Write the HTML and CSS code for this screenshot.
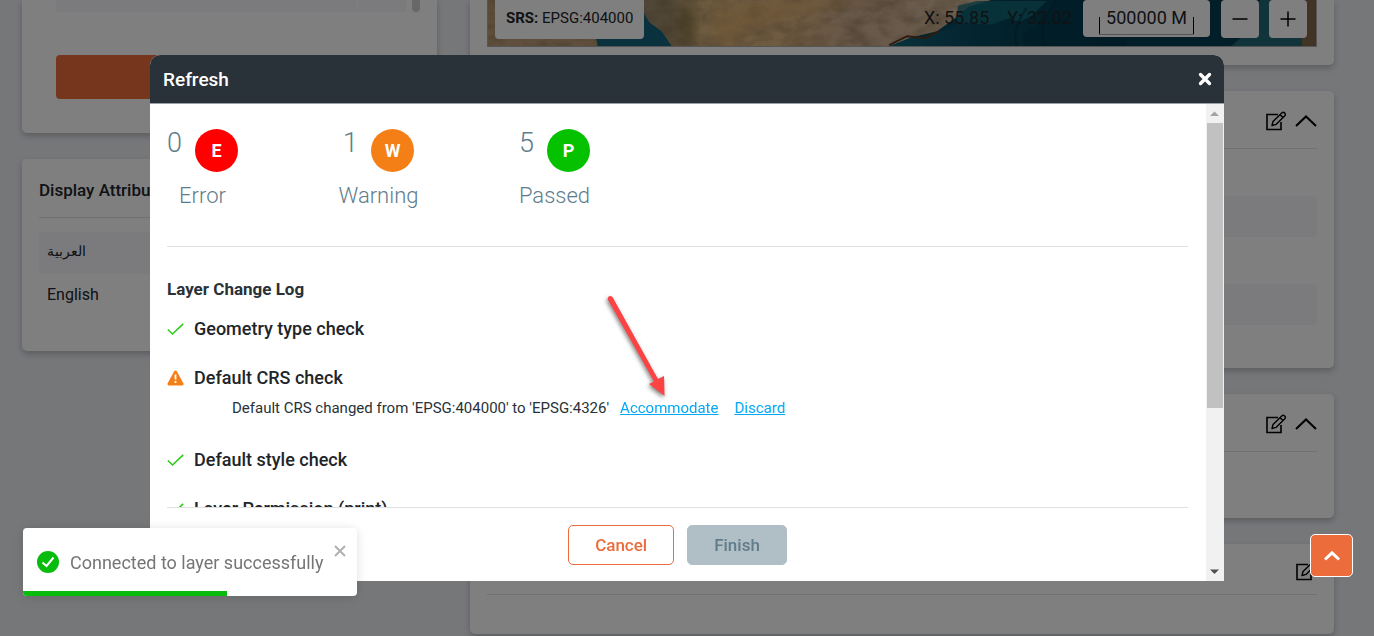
FILE: index.html
```html
<!DOCTYPE html>
<html lang="en">
<head>
  <meta charset="UTF-8" />
  <meta name="viewport" content="width=device-width, initial-scale=1.0"/>
  <title>Refresh layer</title>
  <link rel="stylesheet" href="styles.css">
</head>
<body>
  <svg class="sprite" aria-hidden="true">
    <symbol id="icon-edit" viewBox="0 0 21 20">
      <path d="M12.5 3.500H1.500V18.500H15.500V11" fill="none" stroke="currentColor" stroke-width="1.600"/>
      <path d="M6.500 14.500L7.500 10.500L16.500 1.800Q17.800 .700 19.200 2Q20.500 3.300 19.300 4.700L10.500 13.400ZM14.500 3.700L17.500 6.600" fill="none" stroke="currentColor" stroke-width="1.400" stroke-linejoin="round"/>
    </symbol>
    <symbol id="icon-up" viewBox="0 0 22 20">
      <path d="M1 15L11 5.500L21 15" fill="none" stroke="currentColor" stroke-width="2"/>
    </symbol>
    <symbol id="icon-check" viewBox="0 0 17 16">
      <path d="M.8 8.500L5.500 13L16.200 2.800" fill="none" stroke="#2ecc1a" stroke-width="1.600"/>
    </symbol>
  </svg>

  <main class="page">
    <div class="column column-left">
      <section class="card card-action">
        <div class="table-end">
          <div class="table-cell wide"></div>
          <div class="table-cell"></div>
          <div class="table-thumb"></div>
        </div>
        <button class="action-btn" aria-label="Refresh layer"></button>
      </section>

      <section class="card card-attributes">
        <h2>Display Attributes</h2>
        <ul>
          <li lang="ar">العربية</li>
          <li>English</li>
        </ul>
      </section>
    </div>

    <div class="column column-right">
      <section class="card card-map">
        <div class="map">
          <svg class="map-image" viewBox="0 0 830 47" preserveAspectRatio="none" aria-hidden="true">
            <defs>
              <linearGradient id="sea" x1="0" x2="1">
                <stop offset="0" stop-color="#10657a"/>
                <stop offset=".25" stop-color="#0a5068"/>
                <stop offset=".5" stop-color="#044356"/>
                <stop offset="1" stop-color="#04394d"/>
              </linearGradient>
              <linearGradient id="sand" x1="0" x2="1">
                <stop offset="0" stop-color="#a08f74"/>
                <stop offset=".1" stop-color="#a08c68"/>
                <stop offset=".18" stop-color="#dcb780"/>
                <stop offset=".45" stop-color="#e0b684"/>
                <stop offset=".6" stop-color="#cfb092"/>
                <stop offset="1" stop-color="#dabfa2"/>
              </linearGradient>
              <filter id="terrain" x="0" y="0" width="1" height="1" color-interpolation-filters="sRGB">
                <feTurbulence type="fractalNoise" baseFrequency=".05 .08" numOctaves="4" seed="8"/>
                <feColorMatrix values="0 0 0 0 .5  0 0 0 0 .4  0 0 0 0 .28  .9 0 0 0 -.3"/>
                <feComposite in2="SourceGraphic" operator="in" result="grain"/>
                <feMerge><feMergeNode in="SourceGraphic"/><feMergeNode in="grain"/></feMerge>
              </filter>
              <filter id="soft"><feGaussianBlur stdDeviation="5"/></filter>
            </defs>
            <rect width="830" height="47" fill="#06475a"/>
            <path d="M0 0H110V47H0Z" fill="#c09f79" filter="url(#terrain)"/>
            <path d="M108 37L155 10L190 47H110Z" fill="#13637c"/>
            <path d="M148 0H505L482 7L473 15L450 32L425 38L403 47H184L174 32L162 23Z" fill="url(#sand)" filter="url(#terrain)"/>
            <path d="M240 47Q250 30 290 20T400 0H300L225 10L230 47Z" fill="#e0ae6c" opacity=".6" filter="url(#soft)"/>
            <ellipse cx="200" cy="26" rx="10" ry="18" fill="#605824" opacity=".4" filter="url(#soft)"/>
            <path d="M403 47L425 38L440 40L450 34L470 25L474 15L482 7L505 0H640V47Z" fill="url(#sea)"/>
            <path d="M471 6L490 1H560L545 16L533 22L522 19L505 25L470 23Z" fill="#146b79" opacity=".8"/>
            <path d="M402 46L420 37L438 39L452 32" fill="none" stroke="#5a3821" stroke-width="2"/>
            <path d="M570 0Q560 22 545 30T540 47H830V0Z" fill="#04394d" opacity=".6"/>
            <path d="M570 0Q550 25 558 47M540 8Q525 29 530 47" fill="none" stroke="#032c3c" stroke-width="2" opacity=".55"/>
            <path d="M745 47L765 30L774 0H816V47Z" fill="#206872"/>
            <path d="M816 0H830V47H816Z" fill="#866a49" filter="url(#terrain)"/>
          </svg>
          <div class="map-bar">
            <div class="srs"><b>SRS:</b> EPSG:404000</div>
            <div class="coords"><span>X: 55.85</span><span>Y: 32.02</span></div>
            <div class="scale"><span>500000 M</span></div>
            <button class="zoom-btn" aria-label="Zoom out"><svg viewBox="0 0 16 16"><path d="M.5 8H15.500"/></svg></button>
            <button class="zoom-btn" aria-label="Zoom in"><svg viewBox="0 0 16 16"><path d="M.5 8H15.500M8 .5V15.500"/></svg></button>
          </div>
        </div>
      </section>

      <section class="card card-section">
        <div class="card-tools">
          <button aria-label="Edit"><svg><use href="#icon-edit"/></svg></button>
          <button aria-label="Collapse"><svg><use href="#icon-up"/></svg></button>
        </div>
        <div class="card-rows">
          <div class="field-row"></div>
          <div class="field-row"></div>
        </div>
      </section>

      <section class="card card-section">
        <div class="card-tools">
          <button aria-label="Edit"><svg><use href="#icon-edit"/></svg></button>
          <button aria-label="Collapse"><svg><use href="#icon-up"/></svg></button>
        </div>
        <div class="card-space"></div>
      </section>

      <section class="card card-section card-last">
        <div class="card-tools">
          <button aria-label="Edit"><svg><use href="#icon-edit"/></svg></button>
        </div>
        <div class="card-end"></div>
      </section>
    </div>
  </main>

  <div class="overlay">
    <div class="modal" role="dialog" aria-modal="true" aria-labelledby="modal-title">
      <header class="modal-header">
        <h1 id="modal-title">Refresh</h1>
        <button class="modal-close" aria-label="Close">
          <svg viewBox="0 0 14 14"><path d="M2.500 2.500L11.500 11.500M11.500 2.500L2.500 11.500"/></svg>
        </button>
      </header>

      <div class="modal-body">
        <div class="modal-content">
          <div class="log">
            <div class="stats">
              <div class="stat">
                <div class="stat-top"><span class="count">0</span><span class="badge error">E</span></div>
                <div class="stat-label">Error</div>
              </div>
              <div class="stat">
                <div class="stat-top"><span class="count">1</span><span class="badge warning">W</span></div>
                <div class="stat-label">Warning</div>
              </div>
              <div class="stat">
                <div class="stat-top"><span class="count">5</span><span class="badge passed">P</span></div>
                <div class="stat-label">Passed</div>
              </div>
            </div>

            <h2>Layer Change Log</h2>
            <ul class="checks">
              <li>
                <h3><svg><use href="#icon-check"/></svg>Geometry type check</h3>
              </li>
              <li>
                <h3>
                  <svg viewBox="0 0 17 16">
                    <path d="M8.500 2L15 14H2Z" fill="#f57f17" stroke="#f57f17" stroke-width="3" stroke-linejoin="round"/>
                    <path d="M8.500 4.500V9.500M8.500 11V13" stroke="#fff" stroke-width="1.800"/>
                  </svg>Default CRS check
                </h3>
                <p>
                  <span>Default CRS changed from 'EPSG:404000' to 'EPSG:4326'</span>
                  <a class="accommodate" href="#">Accommodate
                    <svg class="arrow" viewBox="0 0 70 110" aria-hidden="true">
                      <path d="M4.500 4Q5.500 -.5 9.500 2L55 84L61 81L61.500 101L46 89L51 86.500Z"/>
                    </svg>
                  </a>
                  <a href="#">Discard</a>
                </p>
              </li>
              <li>
                <h3><svg><use href="#icon-check"/></svg>Default style check</h3>
              </li>
              <li>
                <h3><svg><use href="#icon-check"/></svg>Layer Permission (print)</h3>
              </li>
            </ul>
          </div>

          <footer class="modal-footer">
            <button class="btn btn-cancel">Cancel</button>
            <button class="btn btn-finish" disabled>Finish</button>
          </footer>
        </div>

        <div class="scrollbar" aria-hidden="true">
          <svg class="scroll-arrow" viewBox="0 0 18 19"><path d="M4 12L8.500 7.500L13 12Z" fill="#a3a3a3"/></svg>
          <div class="scroll-track"><div class="scroll-thumb"></div></div>
          <svg class="scroll-arrow" viewBox="0 0 18 19"><path d="M4 7.500L8.500 12L13 7.500Z" fill="#505050"/></svg>
        </div>
      </div>
    </div>
  </div>

  <div class="toast" role="status">
    <div class="toast-body">
      <svg class="toast-icon" viewBox="0 0 22 22">
        <circle cx="11" cy="11" r="11" fill="#07bc0c"/>
        <path d="M5.500 11.500L9.500 15L16.500 6.500" fill="none" stroke="#fff" stroke-width="2"/>
      </svg>
      <span>Connected to layer successfully</span>
      <button class="toast-close" aria-label="Dismiss">
        <svg viewBox="0 0 12 12"><path d="M1 1L11 11M11 1L1 11"/></svg>
      </button>
    </div>
    <div class="toast-progress"></div>
  </div>

  <button class="to-top" aria-label="Back to top">
    <svg viewBox="0 0 18 12"><path d="M2 9.500L9 2.800L16 9.500"/></svg>
  </button>
</body>
</html>
```

FILE: styles.css
```css
:root {
  --dark: #283238;
  --orange: #ed6c3b;
  --page: #ebeef3;
  --slate: #607d8b;
  --green: #07bc0c;
  --line: #e0e0e0;
}

* {
  box-sizing: border-box;
}

body {
  margin: 0;
  height: 100vh;
  overflow: hidden;
  font-family: Roboto, sans-serif;
  font-size: 16px;
  color: #212529;
  background: var(--page);
}

button {
  font: inherit;
  cursor: pointer;
}

h1, h2, h3, p, ul {
  margin: 0;
  padding: 0;
}

ul {
  list-style: none;
}

.sprite {
  position: absolute;
  width: 0;
  height: 0;
}

/* Page behind the dialog */
.page {
  isolation: isolate;
  display: grid;
  grid-template-columns: 415fr 864fr;
  gap: 33px;
  padding: 0 40px 0 22px;
}

.column {
  display: flex;
  flex-direction: column;
  gap: 26px;
  min-width: 0;
}

.card {
  background: #fff;
  border-radius: 5px;
  box-shadow: 0 3px 6px #00000038;
}

.card-map,
.card-action {
  border-top-left-radius: 0;
  border-top-right-radius: 0;
}

.card-action {
  padding: 0 17px 34px 34px;
}

.table-end {
  display: flex;
  height: 12px;
  margin-bottom: 43px;
}

.table-cell {
  flex: 48;
  background: #f6f6fb;
}

.table-cell.wide {
  flex: 302;
  border-right: 1px solid #fff;
}

.table-thumb {
  width: 8px;
  margin-left: 6px;
  background: #d0d0d0;
  border-radius: 0 0 4px 4px;
}

.action-btn {
  display: block;
  width: 100%;
  height: 44px;
  border: none;
  border-radius: 4px;
  background: var(--orange);
}

.card-attributes {
  padding: 0 17px 35px;
}

.card-attributes h2 {
  padding: 20px 0 16px;
  margin-bottom: 14px;
  border-bottom: 1px solid var(--line);
  font-size: 17px;
  line-height: 22px;
  font-weight: 500;
}

.card-attributes li {
  height: 42px;
  padding: 0 8px;
  line-height: 42px;
}

.card-attributes li:first-child {
  background: #f6f6fb;
  font-size: 14px;
  line-height: 38px;
}

.card-map {
  padding: 0 17px 18px;
}

.map {
  display: grid;
  height: 47px;
  border: 1px solid #aaa;
  border-top: none;
}

.map-image,
.map-bar {
  grid-area: 1 / 1;
  width: 100%;
  height: 46px;
  min-width: 0;
}

.map-bar {
  z-index: 1;
  display: flex;
  align-items: flex-start;
  padding: 0 9px 0 7px;
  font-size: 18px;
}

.srs {
  height: 39px;
  padding: 0 11px;
  background: #fff;
  border-radius: 0 0 4px 4px;
  font-size: 15px;
  line-height: 36px;
}

.coords {
  display: flex;
  gap: 18px;
  margin-left: auto;
  margin-right: 11px;
  line-height: 36px;
}

.scale {
  height: 37px;
  padding: 0 16px;
  margin-right: 11px;
  background: #fff;
  border-radius: 4px;
  line-height: 36px;
}

.scale span {
  display: block;
  height: 35px;
  padding: 0 7px;
  border-bottom: 1px solid #aaa;
  background:
    linear-gradient(#000, #000) left bottom / 1px 17px no-repeat,
    linear-gradient(#000, #000) right bottom / 1px 17px no-repeat;
}

.zoom-btn {
  width: 38px;
  height: 38px;
  margin-right: 10px;
  padding: 0;
  border: none;
  border-radius: 4px;
  background: #fff;
}

.zoom-btn:last-child {
  margin-right: 0;
}

.zoom-btn svg {
  display: block;
  width: 16px;
  height: 16px;
  margin: 0 auto;
}

.zoom-btn path {
  stroke: #000;
  stroke-width: 1.5;
}

.card-section {
  padding: 0 17px;
}

.card-tools {
  display: flex;
  justify-content: flex-end;
  align-items: center;
  gap: 8px;
  height: 58px;
  padding-top: 3px;
  border-bottom: 1px solid var(--line);
}

.card-last .card-tools {
  height: 51px;
}

.card-tools button {
  width: 22px;
  height: 20px;
  padding: 0;
  border: none;
  background: none;
  color: #000;
}

.card-tools svg {
  display: block;
  width: 22px;
  height: 20px;
}

.card-rows {
  display: flex;
  flex-direction: column;
  gap: 47px;
  padding: 47px 0 43px;
}

.field-row {
  height: 41px;
  background: #f6f6fb;
  border-radius: 4px;
}

.card-space {
  height: 66px;
}

.card-end {
  height: 39px;
}

/* Dialog */
.overlay {
  position: fixed;
  inset: 0;
  padding: 55px 150px;
  background: #00000080;
}

.modal {
  display: flex;
  flex-direction: column;
  height: 100%;
  overflow: hidden;
  background: #fff;
  border-radius: 10px 10px 0 0;
}

.modal-header {
  display: flex;
  align-items: center;
  justify-content: space-between;
  flex: none;
  height: 49px;
  padding: 0 12px 0 13px;
  background: var(--dark);
  border-bottom: 1px solid #9a9fa6;
  color: #fff;
}

.modal-header h1 {
  font-size: 19px;
  font-weight: 500;
}

.modal-close {
  padding: 0;
  border: none;
  background: none;
}

.modal-close svg {
  display: block;
  width: 14px;
  height: 14px;
}

.modal-close path {
  stroke: #fff;
  stroke-width: 3.4;
  stroke-linecap: round;
}

.modal-body {
  display: flex;
  flex: 1;
  min-height: 0;
}

.modal-content {
  display: flex;
  flex-direction: column;
  flex: 1;
  min-width: 0;
  padding: 0 18px 0 17px;
}

.log {
  flex: 1;
  min-height: 0;
  overflow: hidden;
}

.stats {
  display: flex;
  height: 143px;
  padding-top: 25px;
  margin-bottom: 32px;
  border-bottom: 1px solid var(--line);
  color: var(--slate);
  font-weight: 300;
}

.stat {
  width: 71px;
  margin-right: 105px;
  text-align: center;
}

.stat-top {
  display: flex;
  justify-content: space-between;
}

.count {
  font-size: 27px;
  line-height: 28px;
}

.badge {
  width: 43px;
  height: 43px;
  border-radius: 50%;
  color: #fff;
  font-size: 18px;
  font-weight: 700;
  line-height: 43px;
}

.error {
  background: #f00;
}

.warning {
  background: #f57f17;
}

.passed {
  background: #06c100;
}

.stat-label {
  display: flex;
  justify-content: center;
  margin-top: 10px;
  font-size: 22px;
  line-height: 28px;
}

.log h2 {
  color: var(--dark);
  font-size: 17px;
  font-weight: 700;
  line-height: 20px;
  margin-bottom: 18px;
}

.checks li {
  margin-bottom: 25px;
}

.checks h3 {
  display: flex;
  align-items: center;
  gap: 10px;
  font-size: 18px;
  font-weight: 500;
  line-height: 24px;
}

.checks h3 svg {
  width: 17px;
  height: 16px;
}

.checks p {
  display: flex;
  margin-left: 65px;
  padding: 9px 0 6px;
  color: var(--dark);
  font-size: 15px;
  line-height: 18px;
}

.checks p span {
  margin-right: 11px;
}

.checks a {
  margin-right: 16px;
  color: #03a9f4;
  text-decoration: underline;
}

.accommodate {
  position: relative;
}

/* pointer drawn over the log */
.arrow {
  position: absolute;
  right: 45px;
  bottom: 12px;
  width: 70px;
  height: 110px;
  overflow: visible;
  filter: drop-shadow(-1px 2px 2px #00000080);
}

.arrow path {
  fill: #fc4344;
}

.modal-footer {
  display: flex;
  flex: none;
  justify-content: center;
  gap: 13px;
  padding: 17px 0 16px;
  border-top: 1px solid var(--line);
}

.btn {
  height: 40px;
  padding: 0 26px;
  border: 1px solid var(--orange);
  border-radius: 5px;
  background: #fff;
  color: var(--orange);
  font-size: 17px;
  font-weight: 500;
}

.btn-finish {
  border-color: #b0bec5;
  background: #b0bec5;
  color: var(--slate);
}

.scrollbar {
  display: flex;
  flex-direction: column;
  flex: none;
  width: 18px;
  background: #f1f1f1;
}

.scroll-arrow {
  flex: none;
  width: 18px;
  height: 19px;
}

.scroll-track {
  flex: 1;
  padding: 0 1px;
}

.scroll-thumb {
  height: 65%;
  background: #c1c1c1;
}

/* Notification */
.toast {
  position: fixed;
  left: 23px;
  bottom: 40px;
  width: 334px;
  overflow: hidden;
  background: #fff;
  border-radius: 4px;
  box-shadow: 0 1px 10px #0000001a, 0 2px 15px #0000000d;
  color: #757575;
}

.toast-body {
  display: flex;
  align-items: center;
  height: 63px;
  padding: 5px 11px 0 14px;
  font-size: 18px;
  white-space: nowrap;
}

.toast-icon {
  flex: none;
  width: 22px;
  height: 22px;
  margin-right: 11px;
}

.toast-close {
  align-self: flex-start;
  padding: 12px 0;
  margin-left: auto;
  border: none;
  background: none;
}

.toast-close svg {
  display: block;
  width: 12px;
  height: 12px;
}

.toast-close path {
  stroke: #b0b0b0;
  stroke-width: 2;
}

.toast-progress {
  width: 61%;
  height: 5px;
  background: var(--green);
}

.to-top {
  position: fixed;
  right: 21px;
  bottom: 59px;
  width: 43px;
  height: 43px;
  padding: 0;
  border: 1px solid #fff;
  border-radius: 5px;
  background: var(--orange);
}

.to-top svg {
  display: block;
  width: 18px;
  height: 12px;
  margin: 0 auto;
}

.to-top path {
  fill: none;
  stroke: #fff;
  stroke-width: 3;
}
```
